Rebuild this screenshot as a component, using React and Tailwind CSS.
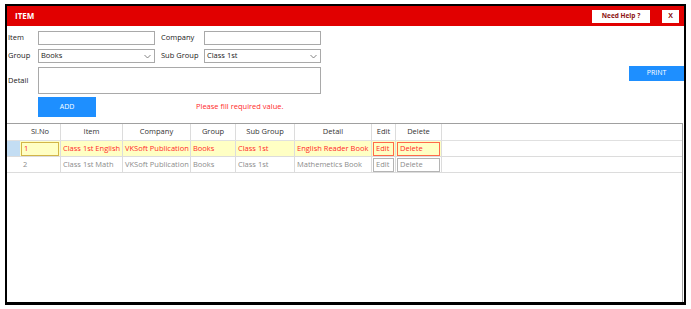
import React from 'react';

const cols = [
  { key: 'sl', label: 'Sl.No', w: 'w-[41px]' },
  { key: 'item', label: 'Item', w: 'w-[62px]' },
  { key: 'company', label: 'Company', w: 'w-[68px]' },
  { key: 'group', label: 'Group', w: 'w-[45px]' },
  { key: 'sub', label: 'Sub Group', w: 'w-[59px]' },
  { key: 'detail', label: 'Detail', w: 'w-[77px]' },
  { key: 'edit', label: 'Edit', w: 'w-[24px]' },
  { key: 'delete', label: 'Delete', w: 'w-[46px]' }
];

const rows = [
  { sl: '1', item: 'Class 1st English', company: 'VKSoft Publication', group: 'Books', sub: 'Class 1st', detail: 'English Reader Book', active: true },
  { sl: '2', item: 'Class 1st Math', company: 'VKSoft Publication', group: 'Books', sub: 'Class 1st', detail: 'Mathemetics Book', active: false }
];

const Chevron = () => (
  <svg width="7" height="5" viewBox="0 0 7 5" className="mr-[3px]">
    <path d="M0.5 1 L3.5 4 L6.5 1" fill="none" stroke="#666" strokeWidth="0.8" />
  </svg>
);

const Select = ({ value }) => (
  <div className="flex h-[14px] w-[117px] items-center justify-between border border-[#a9a9a9] bg-white pl-[2px] text-[7.5px] text-[#222]">
    <span>{value}</span>
    <Chevron />
  </div>
);

const Input = () => <div className="h-[14px] w-[117px] border border-[#a9a9a9] bg-white" />;

const App = () => {
  return (
    <div className="h-[309px] w-[691px] bg-white pt-[4px] pl-[5px] font-['Open_Sans',sans-serif]">
      <div className="flex h-[301px] w-[681px] flex-col border-2 border-b-[3px] border-black">
        {/* header bar */}
        <div className="flex h-[20px] items-center bg-[#e10000] pl-[8px] pr-[5px]">
          <span className="text-[8px] font-bold text-white">ITEM</span>
          <div className="ml-auto flex h-[13px] w-[58px] items-center justify-center bg-white text-[6.5px] font-bold text-[#8b1010]">
            Need Help ?
          </div>
          <div className="ml-[12px] flex h-[13px] w-[17px] items-center justify-center bg-white text-[7px] font-bold text-[#8b1010]">
            X
          </div>
        </div>

        {/* form */}
        <div className="flex pl-[1px] text-[7.5px] text-[#222]">
          <div className="flex flex-col">
            <div className="mt-[5px] flex items-center">
              <span className="w-[30px]">Item</span>
              <Input />
              <span className="ml-[6px] w-[43px]">Company</span>
              <Input />
            </div>
            <div className="mt-[4px] flex items-center">
              <span className="w-[30px]">Group</span>
              <Select value="Books" />
              <span className="ml-[6px] w-[43px]">Sub Group</span>
              <Select value="Class 1st" />
            </div>
            <div className="mt-[4px] flex items-center">
              <span className="w-[30px]">Detail</span>
              <div className="h-[27px] w-[283px] border border-[#a9a9a9] bg-white" />
            </div>
            <div className="mt-[3px] flex items-center">
              <div className="ml-[30px] flex h-[20px] w-[58px] items-center justify-center bg-[#1e8fff] text-[7px] text-white">
                ADD
              </div>
              <span className="ml-[100px] text-[7.5px] text-[#ff2a2a]">Please fill required value.</span>
            </div>
          </div>
          <div className="ml-auto mt-[40px] flex h-[15px] w-[55px] items-center justify-center bg-[#1e8fff] text-[7px] text-white">
            PRINT
          </div>
        </div>

        {/* grid */}
        <div className="mt-[6px] mr-[1px] flex-1 border-t border-r border-[#a0a0a0] text-[7.5px]">
          <div className="flex h-[17px] items-stretch border-b border-[#e0e0e0] text-[#333]">
            <div className="w-[13px]" />
            {cols.map((c) => (
              <div
                key={c.key}
                className={`${c.w} flex items-center justify-center border-r border-[#dcdcdc]`}
              >
                {c.label}
              </div>
            ))}
          </div>
          {rows.map((r) => (
            <div
              key={r.sl}
              className={`flex h-[16px] items-stretch border-b border-[#dcdcdc] ${r.active ? 'text-[#ff2a2a]' : 'text-[#8c8c8c]'}`}
            >
              <div className={`w-[13px] ${r.active ? 'bg-[#c3ddf3]' : 'bg-white'}`} />
              <div className={`w-[41px] flex items-center border-r border-[#dcdcdc] px-[1px] ${r.active ? 'bg-[#ffffc4]' : ''}`}>
                <div
                  className={`flex h-[14px] w-full items-center pl-[2px] ${r.active ? 'border border-[#d2b548] bg-[#ffffc4]' : ''}`}
                >
                  {r.sl}
                </div>
              </div>
              {['item', 'company', 'group', 'sub', 'detail'].map((k, i) => (
                <div
                  key={k}
                  className={`${cols[i + 1].w} flex items-center overflow-hidden whitespace-nowrap border-r border-[#dcdcdc] pl-[2px] ${r.active ? 'bg-[#ffffc4]' : ''}`}
                >
                  {r[k]}
                </div>
              ))}
              <div className={`w-[24px] flex items-center border-r border-[#dcdcdc] px-[1px] ${r.active ? 'bg-[#ffffc4]' : ''}`}>
                <div
                  className={`flex h-[14px] w-full items-center pl-[2px] border ${r.active ? 'border-[#ff6a4a]' : 'border-[#b4b4b4]'}`}
                >
                  Edit
                </div>
              </div>
              <div className={`w-[46px] flex items-center border-r border-[#dcdcdc] px-[1px] ${r.active ? 'bg-[#ffffc4]' : ''}`}>
                <div
                  className={`flex h-[14px] w-full items-center pl-[2px] border ${r.active ? 'border-[#ff6a4a]' : 'border-[#b4b4b4]'}`}
                >
                  Delete
                </div>
              </div>
            </div>
          ))}
        </div>
      </div>
    </div>
  );
};

export default App;
